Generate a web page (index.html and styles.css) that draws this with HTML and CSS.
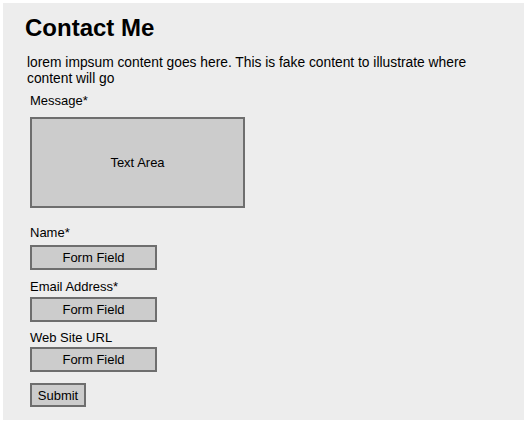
FILE: index.html
```html
<!DOCTYPE html>
<html>
<head>
<meta charset="utf-8">
<link rel="stylesheet" href="styles.css">
</head>
<body>
<div class="panel">
  <h1 class="title">Contact Me</h1>
  <p class="intro">lorem impsum content goes here. This is fake content to illustrate where content will go</p>
  <div class="form">
    <div class="label label-message">Message*</div>
    <div class="box textarea">Text Area</div>
    <div class="label label-name">Name*</div>
    <div class="box field field-name">Form Field</div>
    <div class="label label-email">Email Address*</div>
    <div class="box field field-email">Form Field</div>
    <div class="label label-url">Web Site URL</div>
    <div class="box field field-url">Form Field</div>
    <div class="box submit">Submit</div>
  </div>
</div>
</body>
</html>
```
FILE: styles.css
```css
html, body {
  margin: 0;
  padding: 0;
  background: #ffffff;
}
body {
  font-family: "Liberation Sans", Arial, sans-serif;
  font-size: 13px;
  color: #000;
}
.panel {
  margin: 3px 4px 0 3px;
  height: 417px;
  box-sizing: border-box;
  background: #ededed;
  padding: 11px 0 0 22px;
}
.title {
  margin: 0;
  font-size: 24px;
  line-height: 28px;
  font-weight: bold;
}
.intro {
  margin: 13px 0 0 2px;
  width: 455px;
  font-size: 13.8px;
  line-height: 16px;
}
.form {
  margin-left: 5px;
  display: flex;
  flex-direction: column;
  align-items: flex-start;
}
.label {
  line-height: 16px;
}
.label-message { margin-top: 6px; }
.label-name { margin-top: 17px; }
.label-email { margin-top: 9px; }
.label-url { margin-top: 8px; }
.box {
  box-sizing: border-box;
  background: #cccccc;
  border: 2px solid #6e6e6e;
  display: flex;
  align-items: center;
  justify-content: center;
}
.textarea {
  margin-top: 8px;
  width: 215px;
  height: 91px;
}
.field {
  width: 127px;
  height: 25px;
}
.field-name { margin-top: 4px; }
.field-email { margin-top: 2px; }
.field-url { margin-top: 1px; }
.submit {
  margin-top: 11px;
  width: 56px;
  height: 24px;
}
```
